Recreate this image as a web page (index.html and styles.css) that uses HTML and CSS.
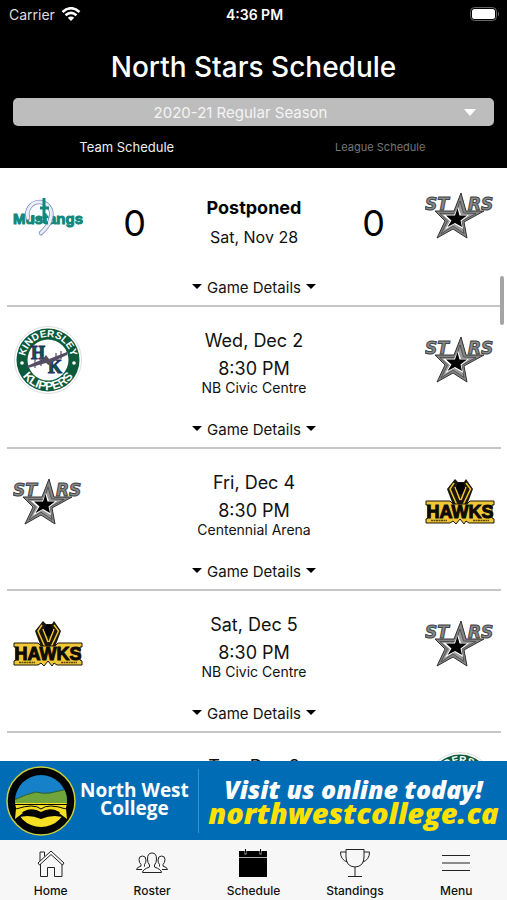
FILE: index.html
```html
<!DOCTYPE html>
<html lang="en">

<head>
  <meta charset="UTF-8">
  <meta name="viewport" content="width=device-width, initial-scale=1.0">
  <title>North Stars Schedule</title>
  <link rel="stylesheet" href="styles.css">
</head>

<body>
  <!-- Team logos -->
  <svg class="sprite" aria-hidden="true">
    <symbol id="logo-stars" viewBox="0 0 70 70">
      <g class="stars-word">
        <text x="0" y="29">ST</text>
        <text x="43" y="29">RS</text>
      </g>
      <path d="M36 12 L41 30 L59 30 L39 41 L42 57 L28 48 L12 57 L20 40 L10 30 L29 30 Z" fill="#858585" stroke="#333" stroke-width="1" />
      <path d="M35 20 L38.500 32 L51 32.500 L36.500 40.500 L39 52.500 L28 45 L16 53 L22.500 40 L15 32.500 L31 32.500 Z" fill="#999" stroke="#444" stroke-width=".8" />
      <path d="M33 26 L36 34 L44 34 L36.500 40 L38 48 L29.500 43 L20 48.500 L25 40 L18 34 L29 34 Z" fill="#fff" />
      <path d="M32.500 27 L34.500 34.500 L42 34.500 L35.500 39.500 L37 46 L30 42 L22.500 46 L26.500 39.500 L21 34.500 L30 34.500 Z" fill="#000" />
    </symbol>
    <symbol id="logo-hawks" viewBox="0 0 70 70">
      <path d="M30 12 L22 22 L28 38 H42 L48 22 L41 12 L39 15 H33 Z" fill="#1a1608" />
      <path d="M29 16 L25 22 L32 38 M41 16 L45.500 22 L38 38 M30 20 L35 33 M41 20 L36 33" fill="none" stroke="#efc32e" stroke-width="1.500" />
      <path d="M33 16 H38 L40 21 L37 27 H34 L31 21 Z" fill="#000" />
      <path d="M1 34 H25 L28 37 H42 L45 34 H69 V38 H67 V51 L69 52 V56 H44 L41 54 L39 57 L35 52 L31 57 L28 54 L25 56 H1 V52 L3 51 V38 H1 Z" fill="#f1c637" stroke="#1a1608" stroke-width="1" />
      <text class="hawks-word" x="35" y="51">HAWKS</text>
      <path d="M6 53.500 H22 M48 53.500 H64" stroke="#5d4a10" stroke-width="1.500" stroke-dasharray="2 .5" />
    </symbol>
    <symbol id="logo-mustangs" viewBox="0 0 70 70">
      <text class="mustangs-word" x="35" y="43">Mustangs</text>
      <path d="M15 37 A12 12 0 1 1 38 36 Q37 44 28 52" fill="none" stroke="#7788bb" stroke-width="4.500" stroke-linecap="round" />
      <path d="M15 37 A12 12 0 1 1 38 36 Q37 44 28 52" fill="none" stroke="#e9eef8" stroke-width="3" stroke-linecap="round" />
      <path d="M31 17 V40 Q31 42 35 42 M27 27 H36 M20 34 V42 M24 38 H29" fill="none" stroke="#12887b" stroke-width="3" />
    </symbol>
    <symbol id="logo-klippers" viewBox="0 0 70 70">
      <circle cx="35" cy="35" r="33.500" fill="#fff" stroke="#ddd" stroke-width="1" />
      <circle cx="35" cy="35" r="31.500" fill="#0b5a3b" />
      <circle cx="35" cy="35" r="20.500" fill="#fff" />
      <path id="arc-top" d="M12 35 A23 23 0 0 1 58 35" fill="none" />
      <path id="arc-bottom" d="M5 35 A30 30 0 0 0 65 35" fill="none" />
      <text class="klippers-word"><textPath href="#arc-top" startOffset="50%">KINDERSLEY</textPath></text>
      <text class="klippers-word klippers-low"><textPath href="#arc-bottom" startOffset="50%">KLIPPERS</textPath></text>
      <circle cx="9" cy="38" r="1.800" fill="#fff" />
      <circle cx="61" cy="38" r="1.800" fill="#fff" />
      <text class="klippers-mono" x="18" y="34">H</text>
      <text class="klippers-mono" x="35" y="48">K</text>
      <path d="M14 41 L30 34 L33 30 L36 34 L54 27 L54 30 L39 37 L37 41 L33 38 L15 43 Z" fill="#554d64" />
      <path d="M22 34 V43 M28 31 V41 M43 28 V36 M48 26 V34" stroke="#554d64" stroke-width="1.200" />
    </symbol>
  </svg>

  <div class="app">
    <!-- Header -->
    <header class="header">
      <div class="status-bar">
        <div class="carrier">
          <span>Carrier</span>
          <svg width="20" height="15" viewBox="0 0 20 15" aria-hidden="true">
            <path d="M1.500 5 Q10 -2.500 18.500 5 M4.500 8.300 Q10 3.500 15.500 8.300" fill="none" stroke="#fff" stroke-width="2.600" />
            <path d="M6.800 10.800 Q10 8 13.200 10.800 L10 14 Z" fill="#fff" />
          </svg>
        </div>
        <span class="clock">4:36 PM</span>
        <svg class="battery" width="30" height="14" viewBox="0 0 30 14" aria-hidden="true">
          <rect x=".5" y=".5" width="26" height="13" rx="4" fill="none" stroke="#666" />
          <rect x="2" y="2" width="23" height="10" rx="2.500" fill="#fff" />
          <path d="M28 4.500 Q30 7 28 9.500 Z" fill="#666" />
        </svg>
      </div>
      <h1>North Stars Schedule</h1>
      <div class="season">
        <select aria-label="Season">
          <option>2020-21 Regular Season</option>
        </select>
      </div>
      <nav class="schedule-tabs">
        <button class="active">Team Schedule</button>
        <button>League Schedule</button>
      </nav>
    </header>

    <!-- Games -->
    <main class="schedule">
      <ul class="games">
        <li class="game">
          <div class="matchup">
            <svg class="logo" role="img" aria-label="Mustangs"><use href="#logo-mustangs" /></svg>
            <span class="score">0</span>
            <div class="info final">
              <strong>Postponed</strong>
              <span class="played">Sat, Nov 28</span>
            </div>
            <span class="score">0</span>
            <svg class="logo" role="img" aria-label="Stars"><use href="#logo-stars" /></svg>
          </div>
          <button class="details">Game Details</button>
        </li>
        <li class="game">
          <div class="matchup">
            <svg class="logo" role="img" aria-label="Kindersley Klippers"><use href="#logo-klippers" /></svg>
            <span class="score"></span>
            <div class="info">
              <span class="date">Wed, Dec 2</span>
              <span class="time">8:30 PM</span>
              <span class="venue">NB Civic Centre</span>
            </div>
            <span class="score"></span>
            <svg class="logo" role="img" aria-label="Stars"><use href="#logo-stars" /></svg>
          </div>
          <button class="details">Game Details</button>
        </li>
        <li class="game">
          <div class="matchup">
            <svg class="logo" role="img" aria-label="Stars"><use href="#logo-stars" /></svg>
            <span class="score"></span>
            <div class="info">
              <span class="date">Fri, Dec 4</span>
              <span class="time">8:30 PM</span>
              <span class="venue">Centennial Arena</span>
            </div>
            <span class="score"></span>
            <svg class="logo" role="img" aria-label="Hawks"><use href="#logo-hawks" /></svg>
          </div>
          <button class="details">Game Details</button>
        </li>
        <li class="game">
          <div class="matchup">
            <svg class="logo" role="img" aria-label="Hawks"><use href="#logo-hawks" /></svg>
            <span class="score"></span>
            <div class="info">
              <span class="date">Sat, Dec 5</span>
              <span class="time">8:30 PM</span>
              <span class="venue">NB Civic Centre</span>
            </div>
            <span class="score"></span>
            <svg class="logo" role="img" aria-label="Stars"><use href="#logo-stars" /></svg>
          </div>
          <button class="details">Game Details</button>
        </li>
        <li class="game next">
          <div class="matchup">
            <span class="logo"></span>
            <span class="score"></span>
            <div class="info">
              <span class="date">Tue, Dec 8</span>
            </div>
            <span class="score"></span>
            <svg class="logo" role="img" aria-label="Kindersley Klippers"><use href="#logo-klippers" /></svg>
          </div>
        </li>
      </ul>
      <div class="scroll-thumb"></div>
    </main>

    <!-- Sponsor banner -->
    <a class="banner" href="#">
      <svg class="college-logo" viewBox="0 0 70 70" aria-hidden="true">
        <clipPath id="inner"><circle cx="35" cy="35" r="26" /></clipPath>
        <circle cx="35" cy="35" r="34" fill="#000" stroke="#c9cf3a" stroke-width="1.500" />
        <g clip-path="url(#inner)">
          <rect width="70" height="38" fill="#1681c8" />
          <path d="M8 34 Q20 28 30 26 Q36 28 44 27 L62 23 V38 H8 Z" fill="#6fa53a" stroke="#24531e" stroke-width=".8" />
          <rect y="37" width="70" height="33" fill="#f5df25" />
        </g>
        <path d="M9 38.500 H61" stroke="#000" stroke-width="1" />
        <path d="M10 43 Q28 37 35 43 Q42 37 60 43" fill="none" stroke="#000" stroke-width="1" />
        <path d="M8 53 Q22 38 35 46 Q48 38 62 53 Q49 47 35 53 Q21 47 8 53 Z" fill="#000" />
        <path d="M10 43 L17 47 L9 53 Z M60 43 L53 47 L61 53 Z" fill="#f5df25" />
      </svg>
      <span class="college-name">North West<br>College</span>
      <span class="pitch">
        <span>Visit us online today!</span>
        <span class="site">northwestcollege.ca</span>
      </span>
    </a>

    <!-- Bottom navigation -->
    <nav class="tab-bar">
      <a href="#">
        <svg width="32" height="30" viewBox="0 0 32 30" aria-hidden="true">
          <path d="M3 15 L16 3 L29 15 L27.500 17 L16 6.500 L4.500 17 Z M5.500 16 V28.500 H12.500 V19.500 H19.500 V28.500 H27 V16 M5 13 V4 H9.500 V8.500" />
        </svg>
        <span>Home</span>
      </a>
      <a href="#">
        <svg width="34" height="30" viewBox="0 0 34 30" aria-hidden="true">
          <path d="M7.500 24.500 Q7.500 21.500 14.500 19 V17 Q12.500 15 12.500 11 Q12.500 5 17 5 Q21.500 5 21.500 11 Q21.500 15 19.500 17 V19 Q26.500 21.500 26.500 24.500 Z" />
          <path d="M7 21.500 H1.500 Q1.500 19.500 6 18 V16.500 Q4 14.500 4 11.500 Q4 8 7.500 8 Q11 8 11 12 Q11 15 9.500 16.500 V18.500 M27 21.500 H32.500 Q32.500 19.500 28 18 V16.500 Q30 14.500 30 11.500 Q30 8 26.500 8 Q23 8 23 12 Q23 15 24.500 16.500 V18.500" />
        </svg>
        <span>Roster</span>
      </a>
      <a href="#">
        <svg width="30" height="30" viewBox="0 0 30 30" aria-hidden="true">
          <rect x="1" y="3" width="28" height="26" fill="#000" stroke="none" />
          <path d="M1 9.500 H29" stroke="#aaa" stroke-width="1" />
          <path d="M7.500 3 V6.500 M22.500 3 V6.500" stroke="#bbb" stroke-width="2" />
          <path d="M7.500 1 V5.500 M22.500 1 V5.500" stroke="#000" stroke-width="1" />
        </svg>
        <span>Schedule</span>
      </a>
      <a href="#">
        <svg width="32" height="30" viewBox="0 0 32 30" aria-hidden="true">
          <path d="M7 1.500 H25 V9 Q25 18.500 16 19 Q7 18.500 7 9 Z M7 4 H1.500 Q1.500 12 8.500 14 M25 4 H30.500 Q30.500 12 23.500 14 M16 19 V28 M9 28.500 H23" />
        </svg>
        <span>Standings</span>
      </a>
      <a href="#">
        <svg width="30" height="30" viewBox="0 0 30 30" aria-hidden="true">
          <path d="M1 7.500 H29 M1 15 H29 M1 22.500 H29" />
        </svg>
        <span>Menu</span>
      </a>
    </nav>
  </div>
</body>

</html>
```
FILE: styles.css
```css
* {
  margin: 0;
  padding: 0;
  box-sizing: border-box;
}

body {
  font-family: Inter, "Liberation Sans", sans-serif;
  color: #111;
  background-color: #fff;
}

button,
select {
  font-family: inherit;
  border: none;
  background: none;
  cursor: pointer;
}

a {
  text-decoration: none;
}

.sprite {
  display: none;
}

.app {
  display: flex;
  flex-direction: column;
  height: 100vh;
}

/* Header */
.header {
  background-color: #000;
  color: #fff;
}

.status-bar {
  display: grid;
  grid-template-columns: 1fr auto 1fr;
  align-items: center;
  height: 28px;
  padding: 0 7px 0 9px;
  font-size: 14px;
}

.carrier {
  display: flex;
  align-items: center;
  gap: 6px;
  color: #ddd;
}

.clock {
  font-weight: 600;
}

.battery {
  justify-self: end;
}

h1 {
  margin: 20px 0 12px;
  font-size: 28px;
  font-weight: 500;
  line-height: 38px;
  text-align: center;
}

.season {
  position: relative;
  margin: 0 13px;
}

.season select {
  display: block;
  width: 100%;
  height: 28px;
  padding-right: 26px;
  appearance: none;
  background-color: #bdbdbd;
  border-radius: 5px;
  color: #f4f4f4;
  font-size: 15px;
  text-align: center;
  text-align-last: center;
}

.season::after {
  content: "";
  position: absolute;
  top: 11px;
  right: 18px;
  border: 6px solid transparent;
  border-top: 7px solid #fff;
  border-bottom: none;
}

.schedule-tabs {
  display: grid;
  grid-template-columns: 1fr 1fr;
  height: 42px;
}

.schedule-tabs button {
  color: #777;
  font-size: 11px;
}

.schedule-tabs .active {
  color: #eee;
  font-size: 13px;
}

/* Games */
.schedule {
  position: relative;
  flex: 1;
  min-height: 0;
  overflow: hidden;
}

.games {
  margin: -5px 6px 0 7px;
  list-style: none;
}

.game {
  border-bottom: 2px solid #c6c6c6;
}

.matchup {
  display: grid;
  grid-template-columns: 70px 1fr 136px 1fr 70px;
  padding: 18px 6px 0;
  min-height: 94px;
}

.logo {
  width: 70px;
  height: 70px;
}

.score {
  padding-top: 6px;
  color: #000;
  font-size: 36px;
  line-height: 72px;
  text-align: center;
}

.info {
  display: flex;
  flex-direction: column;
  align-items: center;
  padding-top: 4px;
  font-size: 18px;
  line-height: 24px;
  white-space: nowrap;
}

.final {
  gap: 5px;
  padding-top: 15px;
}

.final strong {
  color: #000;
}

.played {
  font-size: 16px;
}

.date {
  margin-bottom: 4px;
}

.venue {
  font-size: 14px;
  line-height: 14px;
}

.details {
  display: flex;
  justify-content: center;
  align-items: center;
  gap: 5px;
  width: 100%;
  padding: 19px 0 7px;
  color: #111;
  font-size: 15px;
  line-height: 20px;
}

.details::before,
.details::after {
  content: "";
  margin-bottom: 3px;
  border: 5px solid transparent;
  border-top-color: #000;
  border-bottom: none;
}

.next {
  border-bottom: none;
}

.scroll-thumb {
  position: absolute;
  top: 108px;
  right: 3px;
  width: 4px;
  height: 49px;
  border-radius: 2px;
  background-color: #a5a5a5;
}

/* Logo lettering */
.stars-word {
  font: italic bold 17px "DejaVu Sans", sans-serif;
  fill: #8a8a8a;
  stroke: #444;
  stroke-width: 1px;
}

.hawks-word {
  font: bold 18px "Liberation Sans", sans-serif;
  fill: #0d0b04;
  stroke: #0d0b04;
  stroke-width: 1px;
  text-anchor: middle;
}

.mustangs-word {
  font: bold 15px "Liberation Sans", sans-serif;
  fill: #12887b;
  stroke: #12887b;
  stroke-width: 1px;
  text-anchor: middle;
}

.klippers-word {
  font: bold 10px "Liberation Sans", sans-serif;
  fill: #fff;
  text-anchor: middle;
}

.klippers-low {
  font-size: 12px;
}

.klippers-mono {
  font: bold 18px "Liberation Serif", serif;
  fill: #0b5a3b;
  stroke: #1d3160;
  stroke-width: 1px;
}

/* Sponsor banner */
.banner {
  display: flex;
  align-items: center;
  height: 79px;
  padding: 0 6px;
  background-color: #006cb5;
  color: #fff;
  font-family: "Open Sans", "Noto Sans", sans-serif;
  white-space: nowrap;
}

.college-logo {
  flex: none;
  width: 70px;
  height: 70px;
}

.college-name {
  flex: none;
  padding: 12px 9px 16px 4px;
  border-right: 1px solid #3c8fcb;
  font-size: 19px;
  font-weight: 700;
  line-height: 18px;
  text-align: center;
}

.pitch {
  display: flex;
  flex: 1;
  flex-direction: column;
  align-items: center;
  padding-left: 7px;
  font-size: 25px;
  font-style: italic;
  font-weight: 800;
  line-height: 24px;
}

.site {
  color: #ffe100;
  font-size: 29px;
}

/* Bottom navigation */
.tab-bar {
  display: grid;
  grid-template-columns: repeat(5, 1fr);
  height: 60px;
  background-color: #f7f7f7;
}

.tab-bar a {
  display: flex;
  flex-direction: column;
  align-items: center;
  gap: 5px;
  padding-top: 8px;
  color: #111;
  font-size: 12px;
  font-weight: 500;
  line-height: 16px;
}

.tab-bar svg {
  fill: none;
  stroke: #222;
  stroke-width: 1;
}
```
